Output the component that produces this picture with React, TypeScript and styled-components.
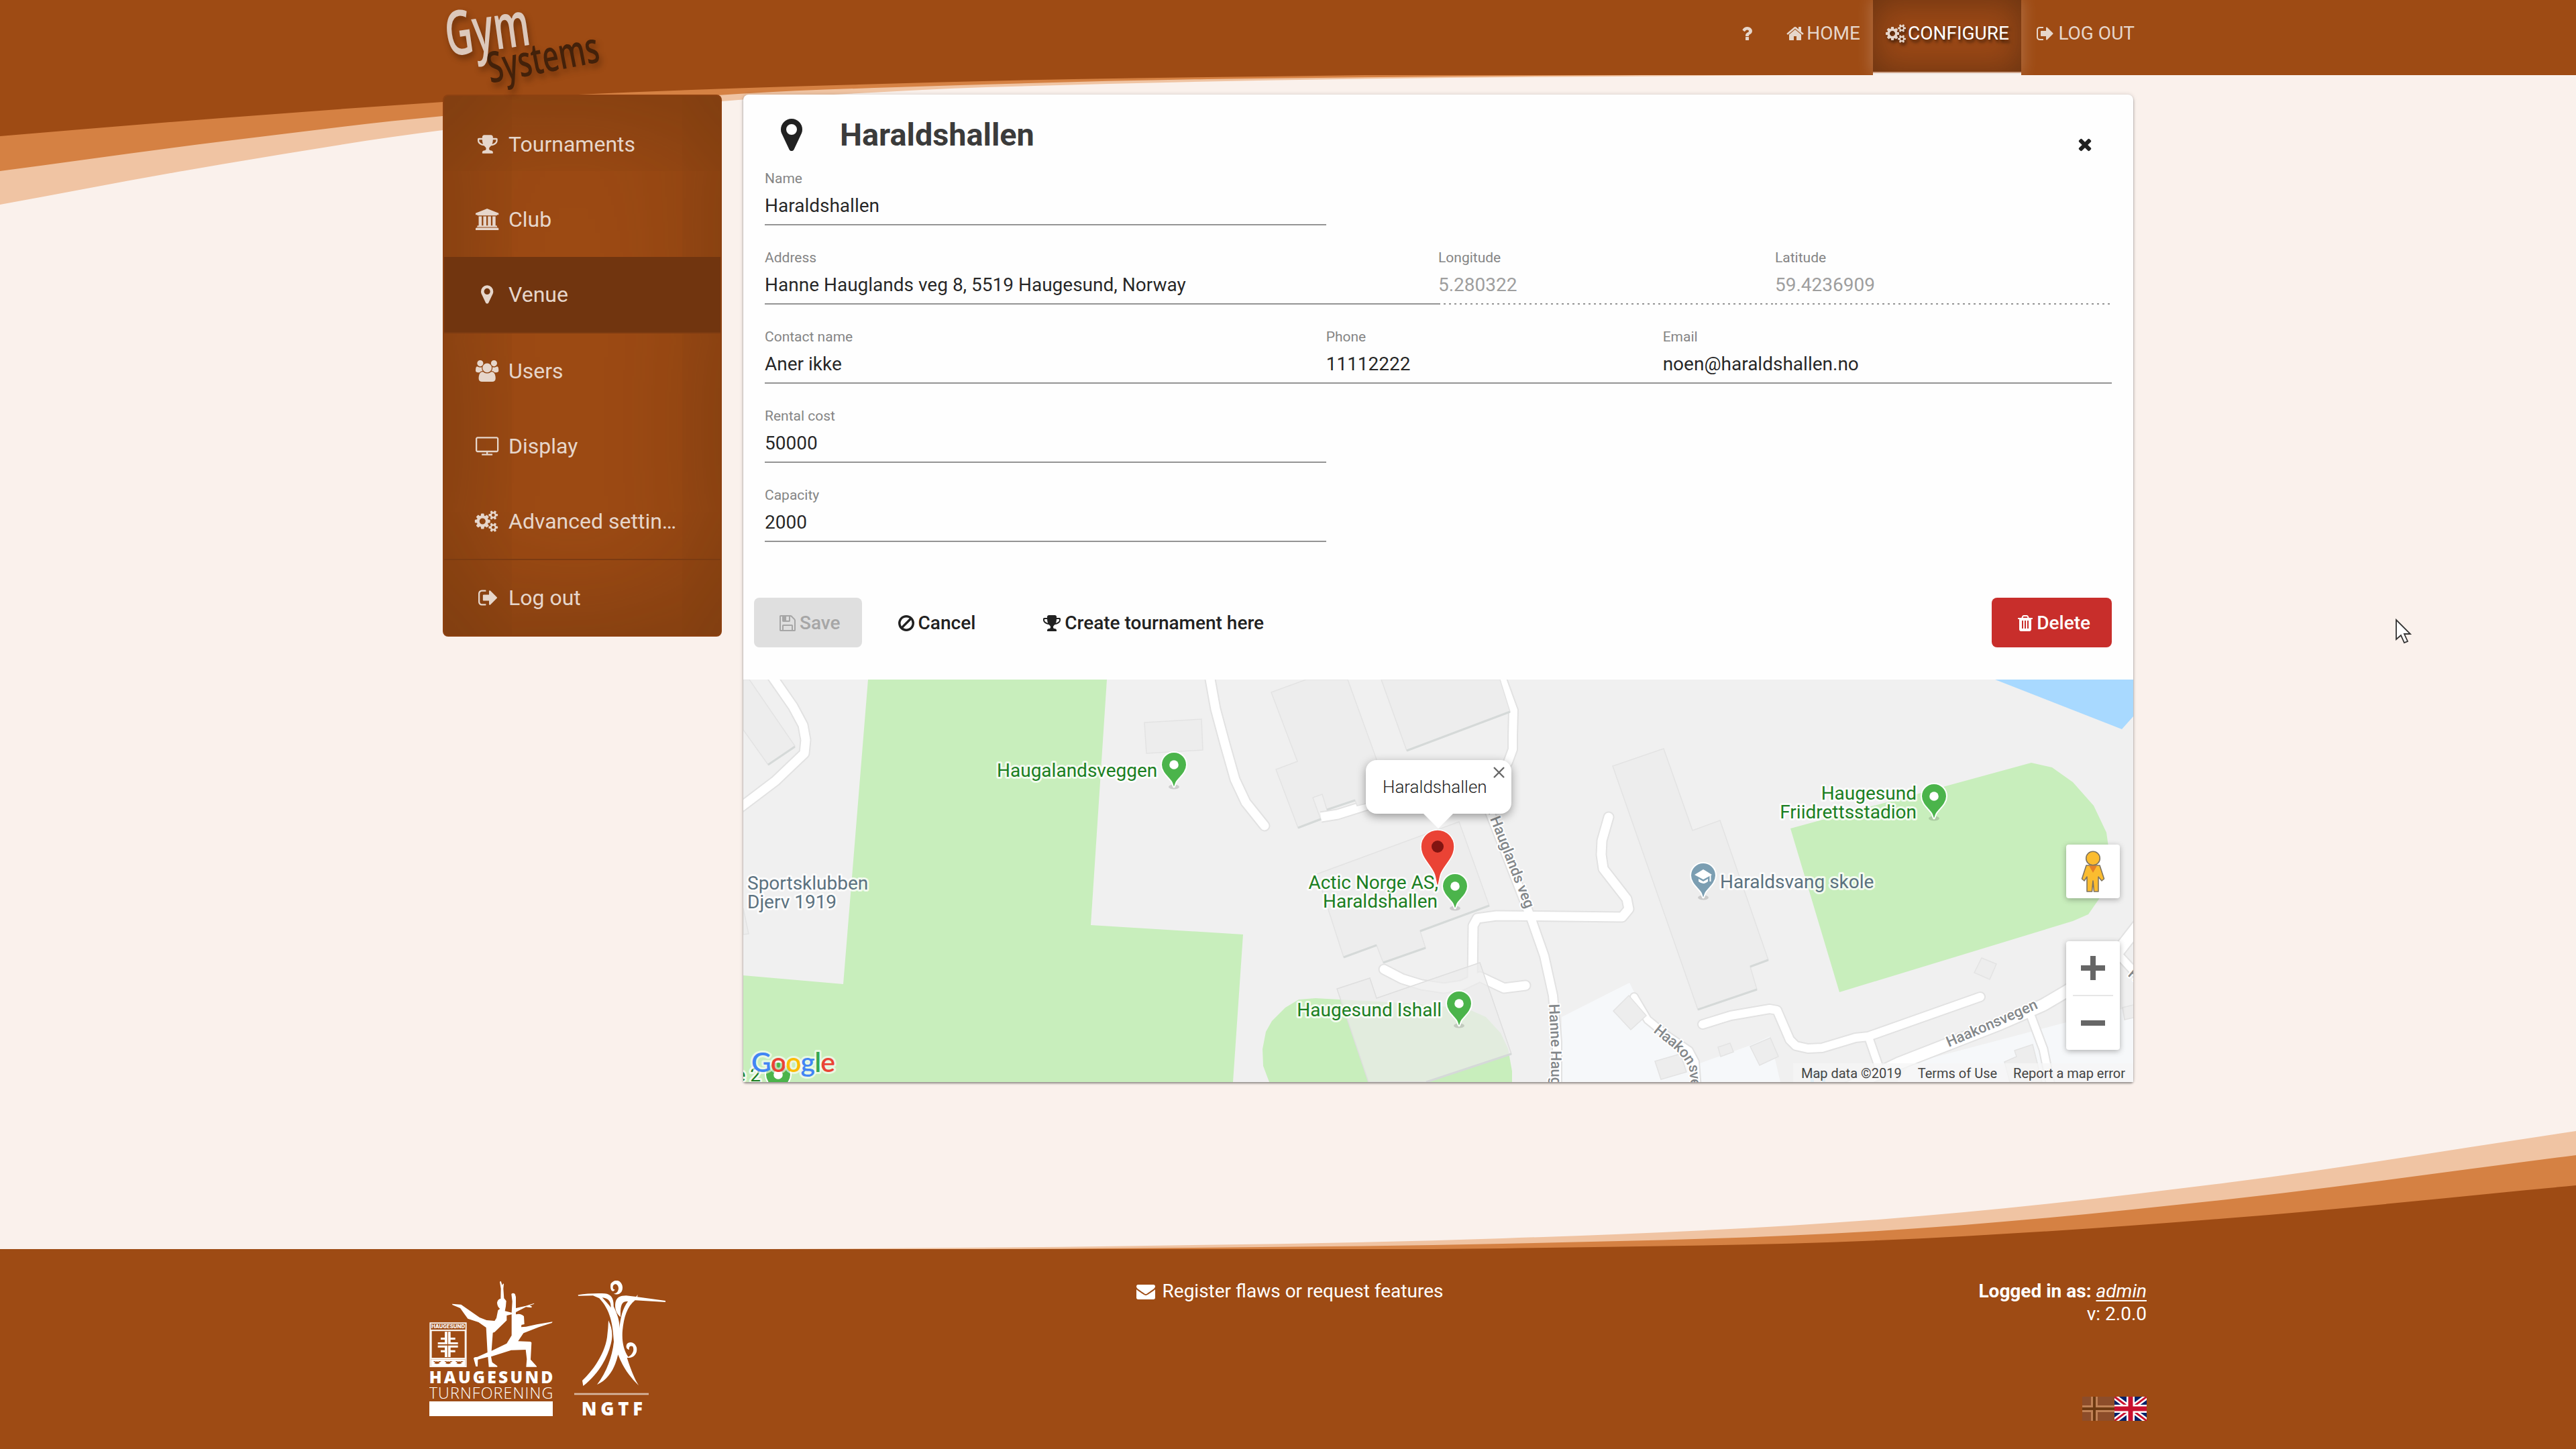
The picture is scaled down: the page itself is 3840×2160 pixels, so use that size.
import React from 'react';
import styled, { createGlobalStyle, css } from 'styled-components';

const c = {
  brand: '#9e4b14',
  mid: '#d58143',
  light: '#f0c4a3',
  page: '#faf1ec',
  pale: '#e6d6cb',
  ink: '#212121',
};

const GlobalStyle = createGlobalStyle`
  *, *::before, *::after { box-sizing: border-box; }
  html, body { margin: 0; padding: 0; }
  body { background: ${c.page}; font-family: Roboto, "Noto Sans", sans-serif; font-size: 28px; color: ${c.ink}; }
`;

/* ---------- icons ---------- */

type Glyph = { x: number; w: number; d: string };

const glyphs: Record<string, Glyph> = {
  marker: { x: 384, w: 1024, d: 'M1152 640q0-106-75-181t-181-75-181 75-75 181 75 181 181 75 181-75 75-181zm256 0q0 109-33 179l-364 774q-16 33-47.5 52t-67.5 19-67.5-19-46.5-52l-365-774q-33-70-33-179 0-212 150-362t362-150 362 150 150 362z' },
  trophy: { x: 64, w: 1664, d: 'M522 883q-74-162-74-371h-256v96q0 78 94.5 162t235.5 113zm1078-275v-96h-256q0 209-74 371 141-29 235.5-113t94.5-162zm128-128v128q0 71-41.5 143t-112 130-173 97.5-215.5 44.5q-42 54-95 95-38 34-52.5 72.5t-14.5 89.5q0 54 30.5 91t97.5 37q75 0 133.5 45.5t58.5 114.5v64q0 14-9 23t-23 9h-832q-14 0-23-9t-9-23v-64q0-69 58.5-114.5t133.5-45.5q67 0 97.5-37t30.5-91q0-51-14.5-89.5t-52.5-72.5q-53-41-95-95-113-5-215.5-44.5t-173-97.5-112-130-41.5-143v-128q0-40 28-68t68-28h288v-96q0-66 47-113t113-47h576q66 0 113 47t47 113v96h288q40 0 68 28t28 68z' },
  university: { x: 0, w: 1920, d: 'M960 0l960 384v128h-128q0 26-20.5 45t-48.5 19h-1526q-28 0-48.5-19t-20.5-45h-128v-128zm-704 640h256v768h128v-768h256v768h128v-768h256v768h128v-768h256v768h59q28 0 48.5 19t20.5 45v64h-1664v-64q0-26 20.5-45t48.5-19h59v-768zm1595 960q28 0 48.5 19t20.5 45v128h-1920v-128q0-26 20.5-45t48.5-19h1782z' },
  users: { x: 0, w: 1920, d: 'M593 896q-162 5-265 128h-134q-82 0-138-40.5t-56-118.5q0-353 124-353 6 0 43.5 21t97.5 42.5 119 21.5q67 0 133-23-5 37-5 66 0 159 81 256zm1071 637q0 120-73 189.5t-194 69.5h-874q-121 0-194-69.5t-73-189.5q0-53 3.5-103.5t14-109 26.5-108.5 43-97.5 62-81 85.5-53.5 111.5-20q10 0 43 21.5t73 48 107 48 135 21.5 135-21.5 107-48 73-48 43-21.5q61 0 111.5 20t85.5 53.5 62 81 43 97.5 26.5 108.5 14 109 3.5 103.5zm-1024-1277q0 106-75 181t-181 75-181-75-75-181 75-181 181-75 181 75 75 181zm704 384q0 159-112.5 271.5t-271.5 112.5-271.5-112.5-112.5-271.5 112.5-271.5 271.5-112.5 271.5 112.5 112.5 271.5zm576 225q0 78-56 118.5t-138 40.5h-134q-103-123-265-128 81-97 81-256 0-29-5-66 66 23 133 23 59 0 119-21.5t97.5-42.5 43.5-21q124 0 124 353zm-128-609q0 106-75 181t-181 75-181-75-75-181 75-181 181-75 181 75 75 181z' },
  television: { x: 0, w: 1920, d: 'M1792 1248v-960q0-13-9.5-22.5t-22.5-9.5h-1600q-13 0-22.5 9.5t-9.5 22.5v960q0 13 9.5 22.5t22.5 9.5h1600q13 0 22.5-9.5t9.5-22.5zm128-960v960q0 66-47 113t-113 47h-736v128h352q14 0 23 9t9 23v64q0 14-9 23t-23 9h-832q-14 0-23-9t-9-23v-64q0-14 9-23t23-9h352v-128h-736q-66 0-113-47t-47-113v-960q0-66 47-113t113-47h1600q66 0 113 47t47 113z' },
  cogs: { x: 0, w: 1920, d: 'M832 896q0-106-75-181t-181-75-181 75-75 181 75 181 181 75 181-75 75-181zm768 512q0-52-38-90t-90-38-90 38-38 90q0 53 37.5 90.5t90.5 37.5 90.5-37.5 37.5-90.5zm0-1024q0-52-38-90t-90-38-90 38-38 90q0 53 37.5 90.5t90.5 37.5 90.5-37.5 37.5-90.5zm-384 421v185q0 10-7 19.5t-16 10.5l-155 24q-11 35-32 76 34 48 90 115 7 11 7 20 0 12-7 19-23 30-82.5 89.5t-78.5 59.5q-11 0-21-7l-115-90q-37 19-77 31-11 108-23 155-7 24-30 24h-186q-11 0-20-7.5t-10-17.5l-23-153q-34-10-75-31l-118 89q-7 7-20 7-11 0-21-8-144-133-144-160 0-9 7-19 10-14 41-53t47-61q-23-44-35-82l-152-24q-10-1-17-9.5t-7-19.5v-185q0-10 7-19.5t16-10.5l155-24q11-35 32-76-34-48-90-115-7-11-7-20 0-12 7-20 22-30 82-89t79-59q11 0 21 7l115 90q34-18 77-32 11-108 23-154 7-24 30-24h186q11 0 20 7.5t10 17.5l23 153q34 10 75 31l118-89q8-7 20-7 11 0 21 8 144 133 144 160 0 8-7 19-12 16-42 54t-45 60q23 48 34 82l152 23q10 2 17 10.5t7 19.5zm640 533v140q0 16-149 31-12 27-30 52 51 113 51 138 0 4-4 7-122 71-124 71-8 0-46-47t-52-68q-20 2-30 2t-30-2q-14 21-52 68t-46 47q-2 0-124-71-4-3-4-7 0-25 51-138-18-25-30-52-149-15-149-31v-140q0-16 149-31 13-29 30-52-51-113-51-138 0-4 4-7 4-2 35-20t59-34 30-16q8 0 46 46.5t52 67.5q20-2 30-2t30 2q51-71 92-112l6-2q4 0 124 70 4 3 4 7 0 25-51 138 17 23 30 52 149 15 149 31zm0-1024v140q0 16-149 31-12 27-30 52 51 113 51 138 0 4-4 7-122 71-124 71-8 0-46-47t-52-68q-20 2-30 2t-30-2q-14 21-52 68t-46 47q-2 0-124-71-4-3-4-7 0-25 51-138-18-25-30-52-149-15-149-31v-140q0-16 149-31 13-29 30-52-51-113-51-138 0-4 4-7 4-2 35-20t59-34 30-16q8 0 46 46.5t52 67.5q20-2 30-2t30 2q51-71 92-112l6-2q4 0 124 70 4 3 4 7 0 25-51 138 17 23 30 52 149 15 149 31z' },
  signOut: { x: 64, w: 1568, d: 'M704 1440q0 4 1 20t.5 26.5-3 23.5-10 19.5-20.5 6.5h-320q-119 0-203.5-84.5t-84.5-203.5v-704q0-119 84.5-203.5t203.5-84.5h320q13 0 22.5 9.5t9.5 22.5q0 4 1 20t.5 26.5-3 23.5-10 19.5-20.5 6.5h-320q-66 0-113 47t-47 113v704q0 66 47 113t113 47h312l11.5 1 11.5 3 8 5.5 7 9 2 13.5zm928-544q0 26-19 45l-544 544q-19 19-45 19t-45-19-19-45v-288h-448q-26 0-45-19t-19-45v-384q0-26 19-45t45-19h448v-288q0-26 19-45t45-19 45 19l544 544q19 19 19 45z' },
  home: { x: 64, w: 1664, d: 'M1472 992v480q0 26-19 45t-45 19h-384v-384h-256v384h-384q-26 0-45-19t-19-45v-480q0-1 .5-3t.5-3l575-474 575 474q1 2 1 6zm223-69l-62 74q-8 9-21 11h-3q-13 0-21-7l-692-577-692 577q-12 8-24 7-13-2-21-11l-62-74q-8-10-7-23.5t11-21.5l719-599q32-26 76-26t76 26l244 204v-195q0-14 9-23t23-9h192q14 0 23 9t9 23v408l219 182q10 8 11 21.5t-7 23.5z' },
  question: { x: 384, w: 1024, d: 'M1088 1256v240q0 16-12 28t-28 12h-240q-16 0-28-12t-12-28v-240q0-16 12-28t28-12h240q16 0 28 12t12 28zm316-600q0 54-15.5 101t-35 76.5-55 59.5-57.5 43.5-61 35.5q-41 23-68.5 65t-27.5 67q0 17-12 32.5t-28 15.5h-240q-15 0-25.5-18.5t-10.5-37.5v-45q0-83 65-156.5t143-108.5q59-27 84-56t25-76q0-42-46.5-74t-107.5-32q-65 0-108 29-35 25-107 115-13 16-31 16-12 0-25-8l-164-125q-13-10-15.5-25t5.5-28q160-266 464-266 80 0 161 31t146 83 106 127.5 41 158.5z' },
  times: { x: 192, w: 1408, d: 'M1490 1322q0 40-28 68l-136 136q-28 28-68 28t-68-28l-294-294-294 294q-28 28-68 28t-68-28l-136-136q-28-28-28-68t28-68l294-294-294-294q-28-28-28-68t28-68l136-136q28-28 68-28t68 28l294 294 294-294q28-28 68-28t68 28l136 136q28 28 28 68t-28 68l-294 294 294 294q28 28 28 68z' },
  floppy: { x: 128, w: 1536, d: 'M512 1536h768v-384h-768v384zm896 0h128v-896q0-14-10-38.5t-20-34.5l-281-281q-10-10-34-20t-39-10v416q0 40-28 68t-68 28h-576q-40 0-68-28t-28-68v-416h-128v1280h128v-416q0-40 28-68t68-28h832q40 0 68 28t28 68v416zm-384-928v-320q0-13-9.5-22.5t-22.5-9.5h-192q-13 0-22.5 9.5t-9.5 22.5v320q0 13 9.5 22.5t22.5 9.5h192q13 0 22.5-9.5t9.5-22.5zm640 32v928q0 40-28 68t-68 28h-1344q-40 0-68-28t-28-68v-1344q0-40 28-68t68-28h928q40 0 88 20t76 48l280 280q28 28 48 76t20 88z' },
  ban: { x: 128, w: 1536, d: 'M1440 893q0-161-87-295l-754 753q137 89 297 89 111 0 211.5-43.5t173.5-116.5 116-174.5 43-212.5zm-999 299l755-754q-135-91-300-91-148 0-273 73t-198 199-73 274q0 162 89 299zm1223-299q0 157-61 300t-163.5 246-245 164-298.5 61-298.5-61-245-164-163.5-246-61-300 61-299.5 163.5-245.5 245-164 298.5-61 298.5 61 245 164 163.5 245.5 61 299.5z' },
  trash: { x: 192, w: 1408, d: 'M704 1376v-704q0-14-9-23t-23-9h-64q-14 0-23 9t-9 23v704q0 14 9 23t23 9h64q14 0 23-9t9-23zm256 0v-704q0-14-9-23t-23-9h-64q-14 0-23 9t-9 23v704q0 14 9 23t23 9h64q14 0 23-9t9-23zm256 0v-704q0-14-9-23t-23-9h-64q-14 0-23 9t-9 23v704q0 14 9 23t23 9h64q14 0 23-9t9-23zm-544-992h448l-48-117q-7-9-17-11h-317q-10 2-17 11zm928 32v64q0 14-9 23t-23 9h-96v948q0 83-47 143.5t-113 60.5h-832q-66 0-113-58.5t-47-141.5v-952h-96q-14 0-23-9t-9-23v-64q0-14 9-23t23-9h309l70-167q15-37 54-63t79-26h320q40 0 79 26t54 63l70 167h309q14 0 23 9t9 23z' },
  envelope: { x: 0, w: 1792, d: 'M1792 710v794q0 66-47 113t-113 47h-1472q-66 0-113-47t-47-113v-794q44 49 101 87 362 246 497 345 57 42 92.5 65.5t94.5 48 110 24.5h2q51 0 110-24.5t94.5-48 92.5-65.5q170-123 498-345 57-39 100-87zm0-294q0 79-49 151t-122 123q-376 261-468 325-10 7-42.5 31t-54 38.5-52 32.5-57.5 27-50 9h-2q-23 0-50-9t-57.5-27-52-32.5-54-38.5-42.5-31q-91-64-262-182.5t-205-142.5q-62-42-117-115.5t-55-136.5q0-78 41.5-130t118.5-52h1472q65 0 112.5 47t47.5 113z' },
};

const IconSvg = styled.svg`
  display: block;
  flex: none;
  fill: currentColor;
  overflow: visible;
`;

const Icon = ({ name, size = 28 }: { name: string; size?: number }) => {
  const g = glyphs[name];
  return (
    <IconSvg width={(g.w / 1792) * size} height={size} viewBox={`${g.x} 0 ${g.w} 1792`}>
      <path d={g.d} />
    </IconSvg>
  );
};

/* ---------- page background ---------- */

type Pt = [number, number];

const curve = (pts: Pt[]) =>
  pts.reduce((d, p, i) => {
    if (i === 0) return `M${p[0]} ${p[1]}`;
    const slope = (k: number) => {
      const a = pts[Math.max(0, k - 1)];
      const b = pts[Math.min(pts.length - 1, k + 1)];
      return (b[1] - a[1]) / (b[0] - a[0]);
    };
    const q = pts[i - 1];
    const h = (p[0] - q[0]) / 3;
    return `${d}C${q[0] + h} ${q[1] + h * slope(i - 1)} ${p[0] - h} ${p[1] - h * slope(i)} ${p[0]} ${p[1]}`;
  }, '');

const topWaves: { fill: string; pts: Pt[] }[] = [
  { fill: c.light, pts: [[0, 305], [330, 245], [660, 194], [1076, 151], [1280, 139], [1470, 130], [2000, 118], [2800, 111]] },
  { fill: c.mid, pts: [[0, 255], [330, 211], [660, 173], [1100, 140], [1336, 130], [1800, 118], [2560, 111]] },
  { fill: c.brand, pts: [[0, 203], [330, 176], [660, 152], [862, 141], [1100, 131.5], [1280, 126], [1600, 118], [2100, 111]] },
];

const bottomWaves: { fill: string; pts: Pt[] }[] = [
  { fill: c.light, pts: [[1000, 1863], [1640, 1858], [2240, 1846], [2800, 1818], [3320, 1763], [3840, 1686]] },
  { fill: c.mid, pts: [[1200, 1863], [1640, 1861], [2240, 1854], [2800, 1835], [3320, 1788], [3840, 1722]] },
  { fill: c.brand, pts: [[1800, 1863], [2240, 1861], [2800, 1849], [3320, 1816], [3840, 1767]] },
];

const WavesSvg = styled.svg`
  position: absolute;
  inset: 0;
  width: 3840px;
  height: 2160px;
  z-index: 0;
`;

const Waves = () => (
  <WavesSvg viewBox="0 0 3840 2160">
    {topWaves.map((w) => (
      <path key={w.fill} fill={w.fill} d={`${curve(w.pts)}V0H0Z`} />
    ))}
    {bottomWaves.map((w) => (
      <path key={w.fill} fill={w.fill} d={`${curve(w.pts)}V1870H${w.pts[0][0]}Z`} />
    ))}
  </WavesSvg>
);

/* ---------- shell ---------- */

const Page = styled.div`
  position: relative;
  display: flex;
  flex-direction: column;
  width: 3840px;
  height: 2160px;
  overflow: hidden;
`;

const Header = styled.header`
  position: relative;
  z-index: 2;
  display: flex;
  justify-content: space-between;
  height: 112px;
  padding: 0 640px 0 660px;
  background: ${c.brand};
`;

const Logo = styled.svg`
  display: block;
  width: 260px;
  height: 140px;
  overflow: visible;
  font-family: "Open Sans", "Noto Sans", sans-serif;
  font-weight: 600;
  filter: drop-shadow(3px 6px 5px rgba(50, 20, 0, 0.45));
`;

const Nav = styled.nav`
  display: flex;
  align-items: flex-start;
`;

const NavItem = styled.a<{ $active?: boolean; $before?: number; $after?: number; $gap?: number }>`
  display: flex;
  align-items: center;
  gap: ${(p) => p.$gap ?? 4}px;
  height: 100px;
  padding: 0 ${(p) => p.$after ?? 18}px 0 ${(p) => p.$before ?? 20}px;
  color: ${c.pale};
  line-height: 98px;
  white-space: nowrap;
  ${(p) =>
    p.$active &&
    css`
      height: 109px;
      padding-bottom: 7px;
      border-bottom: 2px solid #cda48c;
      background: #9a4816;
      color: #fff;
      text-shadow: 2px 4px 4px rgba(0, 0, 0, 0.6);
      box-shadow: inset 0 0 50px rgba(40, 25, 10, 0.45), 0 3px 0 #f5f0ed, 0 0 22px 2px rgba(255, 255, 255, 0.22);
      svg { color: ${c.pale}; filter: drop-shadow(2px 4px 2px rgba(0, 0, 0, 0.5)); }
    `}
`;

const Main = styled.main`
  position: relative;
  z-index: 1;
  display: flex;
  align-items: flex-start;
  gap: 32px;
  width: 2520px;
  margin: 29px auto 0;
`;

const Sidebar = styled.nav`
  width: 416px;
  padding: 16px 0 0;
  border: 2px solid rgba(110, 50, 12, 0.35);
  border-radius: 8px;
  background: ${c.brand};
  box-shadow: inset 0 0 200px rgba(50, 30, 10, 0.44);
`;

const SideItem = styled.a<{ $active?: boolean; $ruled?: boolean }>`
  display: flex;
  align-items: center;
  gap: 11px;
  height: 112px;
  padding-left: 44px;
  color: ${c.pale};
  font-size: 32px;
  white-space: nowrap;
  ${(p) => p.$active && css`background: #71350f;`}
  ${(p) => p.$ruled && css`height: 114px; border-bottom: 2px solid #7c3b11;`}
`;

const SideIcon = styled.span`
  display: flex;
  justify-content: center;
  width: 41px;
`;

/* ---------- venue card ---------- */

const Card = styled.section`
  width: 2072px;
  height: 1472px;
  border-radius: 8px 8px 4px 4px;
  background: #fefefe;
  box-shadow: 0 2px 3px rgba(0, 0, 0, 0.38), 0 0 6px rgba(0, 0, 0, 0.14);
`;

const CardHead = styled.div`
  display: flex;
  align-items: flex-start;
  height: 103px;
  padding: 32px 61px 0 56px;
`;

const Title = styled.h1`
  flex: 1;
  margin: 0 0 0 56px;
  color: #3b3b3b;
  font-size: 46.8px;
  font-weight: 700;
  line-height: 56px;
`;

const CloseButton = styled.button`
  display: flex;
  margin-top: 28px;
  padding: 0;
  border: 0;
  background: none;
  color: ${c.ink};
`;

const Form = styled.form`
  padding: 0 32px;
`;

const FormRow = styled.div`
  display: grid;
  grid-template-columns: repeat(12, 1fr);
  height: 118px;
`;

const Field = styled.label<{ $span: number; $disabled?: boolean }>`
  display: flex;
  flex-direction: column;
  grid-column: span ${(p) => p.$span};
  height: 92px;
  padding-top: 8px;
  background: ${(p) =>
    p.$disabled
      ? 'linear-gradient(to right, #949494 0 3px, transparent 3px) 0 100% / 8px 2px repeat-x'
      : 'linear-gradient(#949494, #949494) 0 100% / 100% 2px no-repeat'};
  color: ${(p) => (p.$disabled ? '#9e9e9e' : 'rgba(0, 0, 0, 0.87)')};
`;

const FieldLabel = styled.span`
  color: #858585;
  font-size: 21px;
  line-height: 28px;
`;

const FieldValue = styled.span`
  margin-top: 11px;
  font-size: 28px;
  line-height: 32px;
`;

const Actions = styled.div`
  display: flex;
  align-items: center;
  height: 74px;
  margin: 57px 32px 0 16px;
`;

const Button = styled.button<{ $tone?: 'muted' | 'danger'; $left: number; $right: number }>`
  display: flex;
  align-items: center;
  gap: 6px;
  height: 74px;
  padding: 2px ${(p) => p.$right}px 0 ${(p) => p.$left}px;
  border: 0;
  border-radius: 8px;
  background: ${(p) => (p.$tone === 'muted' ? '#dfdfdf' : p.$tone === 'danger' ? '#c82e2b' : 'transparent')};
  color: ${(p) => (p.$tone === 'muted' ? '#a6a6a6' : p.$tone === 'danger' ? '#fff' : c.ink)};
  font: 500 28px/36px Roboto, sans-serif;
  white-space: nowrap;
  ${(p) => p.$tone === 'danger' && css`margin-left: auto;`}
`;

/* ---------- map ---------- */

const MapFrame = styled.div`
  position: relative;
  height: 600px;
  margin-top: 48px;
  overflow: hidden;
  background: #f0f0f0;
`;

const MapSvg = styled.svg`
  display: block;
  width: 2072px;
  height: 600px;
  font-family: Roboto, sans-serif;
`;

const Building = styled.polygon`
  fill: #ededed;
  stroke: #e3e3e3;
  stroke-width: 1.5;
`;

const Park = styled.polygon`
  fill: #c8eebc;
`;

const Plot = styled.polygon`
  fill: #f6f8fa;
`;

const Edge = styled.path`
  fill: none;
  stroke: #d5d9d8;
  stroke-width: 3;
`;

const RoadLine = styled.path<{ $w: number; $casing?: boolean; $butt?: boolean }>`
  fill: none;
  stroke: ${(p) => (p.$casing ? '#e2e2e2' : '#fff')};
  stroke-width: ${(p) => (p.$casing ? p.$w + 4 : p.$w)};
  stroke-linecap: ${(p) => (p.$butt ? 'butt' : 'round')};
  stroke-linejoin: round;
`;

const Place = styled.text<{ $kind?: 'plain' }>`
  fill: ${(p) => (p.$kind === 'plain' ? '#5b7280' : '#1b7f22')};
  stroke: rgba(255, 255, 255, 0.75);
  stroke-width: 6px;
  stroke-linejoin: round;
  paint-order: stroke;
  font-size: 28px;
`;

const Street = styled.text`
  fill: #83878a;
  stroke: #fff;
  stroke-width: 4px;
  stroke-linejoin: round;
  paint-order: stroke;
  font-size: 22px;
  font-weight: 500;
`;

const roads: { d: string; w: number; butt?: boolean }[] = [
  { d: 'M42 -6L74 40L89 68L93 90L91 110L48 151L-6 192', w: 13 },
  { d: 'M695 -6L704 44L718 96L733 149L749 183L777 218', w: 13 },
  { d: 'M861 205L886 201L924 189L960 178', w: 13, butt: true },
  { d: 'M1129 -6L1148 46L1147 84L1147 104L1140 123L1120 150L1106 180L1174 355L1194 412L1207 471L1213 540L1213 610', w: 12 },
  { d: 'M1290 205L1280 240L1279 261L1282 282L1317 327L1320 342L1310 354L1123 352L1094 356L1088 367L1087 444', w: 13 },
  { d: 'M955 432L982 446L1011 455L1044 460L1071 456L1098 443L1134 460L1166 456', w: 13 },
  { d: 'M1328 473L1348 507L1375 529L1410 553L1419 570L1422 610', w: 10 },
  { d: 'M1920 503L1938 551L1950 610', w: 11 },
  { d: 'M2050 410L2085 448', w: 11 },
  { d: 'M1677 532L1692 575', w: 11 },
  { d: 'M1430 514L1472 501L1530 491L1541 493L1560 537L1569 546L1587 550L1608 549L1658 534L1677 532L1844 473', w: 12 },
  { d: 'M1640 612L1723 572L1874 513L1938 485L1972 465L2035 424L2080 366', w: 17 },
];

const houses = [
  '0,0 9,0 77,99 37,127 0,75',
  '0,341 8,379 0,380',
  '598,64 683,59 685,105 601,110',
  '787,19 839,0 901,0 944,119 928,185 915,188 912,180 870,194 863,171 849,176 861,209 827,221 794,134 826,122',
  '951,0 989,106 1143,48 1128,0',
  '855,290 1067,212 1112,337 1009,375 1017,400 954,422 944,396 895,414',
  '1297,494 1320,471 1346,501 1323,522',
  '1359,569 1397,558 1406,585 1368,596',
  '1296,129 1372,103 1415,225 1456,210 1528,418 1501,428 1511,462 1423,492',
  '1835,437 1846,415 1868,424 1858,447',
  '1453,548 1471,542 1476,555 1457,562',
  '1501,547 1531,534 1543,562 1515,575',
  '1880,570 1898,562 1895,553 1922,544 1936,600 1888,600',
  '2056,489 2080,483 2080,502 2059,507',
];

const edges =
  'M77 100L37 127M827 221L861 208M870 194L912 180M989 106L1143 48M1112 337L1009 375M1017 400L954 422M944 396L895 414M1528 418L1501 428M1511 462L1423 492';

const Pin = ({ x, y, color = '#4bb44b', school }: { x: number; y: number; color?: string; school?: boolean }) => (
  <g transform={`translate(${x} ${y})`}>
    <ellipse cx="0" cy="33" rx="8" ry="3.5" fill="rgba(0,0,0,.14)" />
    <path
      d="M0 33.5C-1.5 33.5-1.8 29-3.5 26C-7 19.5-19 12-19 0A19 19 0 0 1 19 0C19 12 7 19.5 3.5 26C1.8 29 1.5 33.5 0 33.5Z"
      fill={color}
      stroke="#fff"
      strokeWidth="2"
    />
    {school ? (
      <g fill="#fff">
        <path d="M-13-1L0-9L13-1L0 6Z" />
        <path d="M-7 5V9Q0 15 7 9V5L0 9Z" />
        <path d="M9.5 0H11.5V9H9.5Z" />
      </g>
    ) : (
      <circle r="6.8" fill="#fff" />
    )}
  </g>
);

const Popup = styled.div`
  position: absolute;
  left: 928px;
  top: 120px;
  display: flex;
  align-items: center;
  width: 217px;
  height: 80px;
  padding: 0 0 0 25px;
  border-radius: 16px;
  background: #fff;
  box-shadow: 0 4px 14px rgba(0, 0, 0, 0.38);
  color: #222;
  font-size: 26px;
  font-weight: 300;
  &::after {
    content: '';
    position: absolute;
    left: 86px;
    top: 80px;
    border: solid transparent;
    border-width: 22px 22px 0;
    border-top-color: #fff;
  }
`;

const PopupClose = styled.svg`
  position: absolute;
  right: 10px;
  top: 10px;
  width: 17px;
  height: 17px;
`;

const MapControls = styled.div`
  position: absolute;
  right: 20px;
  top: 246px;
  display: flex;
  flex-direction: column;
  gap: 64px;
`;

const ControlBox = styled.div`
  display: flex;
  flex-direction: column;
  align-items: center;
  justify-content: center;
  width: 80px;
  min-height: 80px;
  border-radius: 4px;
  background: #fff;
  box-shadow: 0 2px 8px rgba(0, 0, 0, 0.3);
`;

const ZoomButton = styled.button`
  display: flex;
  align-items: center;
  justify-content: center;
  width: 60px;
  height: 80px;
  padding: 0;
  border: 0;
  background: none;
  & + & { border-top: 2px solid #e6e6e6; height: 82px; }
`;

const Attribution = styled.div`
  position: absolute;
  right: 0;
  bottom: 0;
  display: flex;
  color: #444;
  font-size: 20px;
  line-height: 26px;
`;

const Credit = styled.span`
  padding: 2px 12px 0;
  background: rgba(245, 245, 245, 0.75);
`;

const VenueMap = () => (
  <MapFrame>
    <MapSvg viewBox="0 0 2072 600">
      <defs>
        <path id="street-a" d="M1094 160L1109 197L1170 352L1184 392" />
        <path id="street-b" d="M1201 484L1204 540L1205 720" />
        <path id="street-c" d="M1356 525L1376 541Q1400 558 1410 580L1416 640" />
        <path id="street-d" d="M1797 548L1868 518L1948 482" />
      </defs>
      <Plot points="1220,503 1321,452 1340,490 1400,545 1426,572 1502,545 1530,532 1546,600 1220,600" />
      <Plot points="1741,572 1972,511 2072,487 2072,600 1720,600" />
      <Park points="186,0 542,0 518,366 745,380 730,600 0,600 0,441 149,454" />
      <Park points="784,600 775,576 774,551 779,525 788,509 808,489 828,477 853,475 1000,483 1080,491 1107,503 1129,527 1140,550 1146,584 1146,600" />
      <Park points="1561,222 1920,124 1951,131 1982,153 2013,188 2032,228 2038,270 2034,305 2021,327 2005,350 1982,360 1634,466" />
      <polygon fill="#a8d9ff" points="1866,0 2055,74 2072,55 2072,0" />
      {roads.map((r) => <RoadLine key={r.d} d={r.d} $w={r.w} $butt={r.butt} $casing />)}
      {roads.map((r) => <RoadLine key={r.d} d={r.d} $w={r.w} $butt={r.butt} />)}
      {houses.map((h) => <Building key={h} points={h} />)}
      <polygon
        points="885,461 934,445 944,475 1098,422 1145,558 1018,600 932,600"
        fill="rgba(236,236,236,.72)"
        stroke="#dedede"
        strokeWidth="1.5"
      />
      <Edge d={edges} />
      <Edge d="M1145 558L1018 600" />
      <path d="M1591 584h22v16h-5v-9h-12v9h-5z" fill="#a9dcf5" />

      <Street letterSpacing="-0.1"><textPath href="#street-a" startOffset="34">e Hauglands veg</textPath></Street>
      <Street><textPath href="#street-b">Hanne Hauglands</textPath></Street>
      <Street letterSpacing="-0.5"><textPath href="#street-c">Haakonsve</textPath></Street>
      <Street><textPath href="#street-d">Haakonsvegen</textPath></Street>
      <Street transform="translate(2063 441) rotate(40)">H</Street>

      <Place x="378" y="145">Haugalandsveggen</Place>
      <Place x="1036" y="312" textAnchor="end">Actic Norge AS,</Place>
      <Place x="1035" y="340" textAnchor="end">Haraldshallen</Place>
      <Place x="1041" y="502" textAnchor="end">Haugesund Ishall</Place>
      <Place x="1749" y="179" textAnchor="end">Haugesund</Place>
      <Place x="1749" y="207" textAnchor="end">Friidrettsstadion</Place>
      <Place x="26" y="599" textAnchor="end">e 2</Place>
      <Place x="6" y="313" $kind="plain">Sportsklubben</Place>
      <Place x="6" y="341" $kind="plain">Djerv 1919</Place>
      <Place x="1456" y="311" $kind="plain">Haraldsvang skole</Place>

      <Pin x={642} y={127} />
      <Pin x={1061} y={308} />
      <Pin x={1067} y={483} />
      <Pin x={1775} y={174} />
      <Pin x={52} y={589} />
      <Pin x={1431} y={292} color="#7b9eb2" school />

      <path
        d="M1035 307C1033 307 1032.500 297 1030.500 291C1026 277 1010 267 1010 249A25 25 0 0 1 1060 249C1060 267 1044 277 1039.500 291C1037.500 297 1037 307 1035 307Z"
        fill="#ea4335"
        stroke="#fff"
        strokeWidth="1.5"
      />
      <circle cx="1035" cy="249" r="9" fill="#811411" />

      <text
        x="12"
        y="585"
        fontFamily="Lato, sans-serif"
        fontSize="41"
        fontWeight="600"
        stroke="rgba(255,255,255,.6)"
        strokeWidth="6"
        strokeLinejoin="round"
        paintOrder="stroke"
        textLength="125"
      >
        <tspan fill="#4285f4">G</tspan>
        <tspan fill="#ea4335">o</tspan>
        <tspan fill="#fbbc05">o</tspan>
        <tspan fill="#4285f4">g</tspan>
        <tspan fill="#34a853">l</tspan>
        <tspan fill="#ea4335">e</tspan>
      </text>
    </MapSvg>

    <Popup>
      Haraldshallen
      <PopupClose viewBox="0 0 17 17">
        <path d="M1 1L16 16M16 1L1 16" stroke="#666" strokeWidth="2.4" />
      </PopupClose>
    </Popup>

    <MapControls>
      <ControlBox>
        <svg width="36" height="62" viewBox="0 0 36 62">
          <g fill="#fbbc2f" stroke="#7d7360" strokeWidth="1.6" strokeLinejoin="round">
            <path d="M8 22H28L34.500 42L31 45L26 39V61H19.500L18 45L16.500 61H9V39L5 45L1.500 42Z" />
            <circle cx="18" cy="11.500" r="10.300" />
          </g>
          <path d="M12 22.500H24L18 33Z" fill="#e58027" />
        </svg>
      </ControlBox>
      <ControlBox>
        <ZoomButton>
          <svg width="36" height="36"><path d="M0 14H14V0H22V14H36V22H22V36H14V22H0Z" fill="#666" /></svg>
        </ZoomButton>
        <ZoomButton>
          <svg width="36" height="8"><path d="M0 0H36V8H0Z" fill="#666" /></svg>
        </ZoomButton>
      </ControlBox>
    </MapControls>

    <Attribution>
      <Credit>Map data ©2019</Credit>
      <Credit>Terms of Use</Credit>
      <Credit>Report a map error</Credit>
    </Attribution>
  </MapFrame>
);

/* ---------- footer ---------- */

const Footer = styled.footer`
  position: relative;
  z-index: 1;
  display: grid;
  grid-template-columns: 1fr auto 1fr;
  height: 298px;
  margin-top: auto;
  padding: 47px 640px 0;
  background: ${c.brand};
  color: #fff;
  line-height: 34px;
`;

const Sponsors = styled.div`
  display: flex;
  align-items: flex-start;
  gap: 32px;
`;

const Feedback = styled.a`
  display: flex;
  align-items: center;
  gap: 11px;
  height: 32px;
  padding-left: 5px;
`;

const Session = styled.div`
  display: flex;
  flex-direction: column;
  align-items: flex-end;
  margin-top: -1px;
`;

const User = styled.a`
  font-style: italic;
  font-weight: 400;
  text-decoration: underline;
  text-decoration-thickness: 2px;
  text-underline-offset: 4px;
`;

const Flags = styled.div`
  display: flex;
  margin-top: 106px;
`;

const Flag = styled.svg<{ $dim?: boolean }>`
  display: block;
  width: 48px;
  height: 36px;
  opacity: ${(p) => (p.$dim ? 0.45 : 1)};
`;

const ClubLogo = () => (
  <svg width="184" height="202" viewBox="120 147 552 606" fill="#fff">
    <path d="M121 334H287V534H121ZM127 340V366H281V340ZM131 373V492H278V373ZM127 499V528H281V499Z" fillRule="evenodd" opacity=".92" />
    <rect x="127" y="499" width="154" height="29" />
    <g fill={c.brand}>
      <path d="M137 509q8-4 12 1q3-2 5-2q2 0 5 2q6-5 15-1q-8 2-12 6q3 1 4 3q-5 1-8 0q-4 3-8 0q-4 1-8 0q3-2 4-4q-3-4-9-5z" />
      <path d="M187 509q8-4 12 1q3-2 5-2q2 0 5 2q6-5 15-1q-8 2-12 6q3 1 4 3q-5 1-8 0q-4 3-8 0q-4 1-8 0q3-2 4-4q-3-4-9-5z" />
      <path d="M236 509q8-4 12 1q3-2 5-2q2 0 5 2q6-5 15-1q-8 2-12 6q3 1 4 3q-5 1-8 0q-4 3-8 0q-4 1-8 0q3-2 4-4q-3-4-9-5z" />
    </g>
    <path d="M189 376H201V431H158V423H189V411H171V402H189ZM204 376H215V402H236V411H215V423H248V431H204ZM158 437H201V489H189V467H171V458H189V446H158ZM204 437H248V446H215V458H236V467H215V489H204Z" />
    <text x="129" y="361" fontFamily="Inter, sans-serif" fontSize="23" fontWeight="800" textLength="150" lengthAdjust="spacingAndGlyphs">HAUGESUND</text>
    <path d="M221 251L262 254L290 274L345 312L376 324L412 327L420 314L427 280L436 273Q423 262 423 245Q426 230 439 228L440 183L435 152L440 149L446 168L450 160L453 162L451 183L454 226L464 238L462 262L458 283L488 290L491 240L487 207Q494 199 503 207L507 220V270L551 260L589 248L588 251L568 259L578 262L577 268L552 265L507 288V298Q530 292 543 307L545 342L532 345L531 355L552 353L600 343L671 331L668 336L610 355L541 382L517 418L572 420L577 424L573 500L600 530V533H553L556 498L551 456L486 458L396 487L401 512L424 529V533H386L382 488L337 500L336 531H328L318 494Q320 488 335 488L380 468L374 357L340 333L292 317L258 270L224 256ZM412 377L404 380L398 461L466 428L488 392V298L466 303V325Z" fillRule="evenodd" />
    <text x="119" y="607" fontFamily="Open Sans, sans-serif" fontSize="74" fontWeight="800" textLength="554" lengthAdjust="spacing">HAUGESUND</text>
    <text x="119" y="675" fontFamily="Open Sans, sans-serif" fontSize="70" fontWeight="300" textLength="554" lengthAdjust="spacing">TURNFORENING</text>
    <rect x="120" y="687" width="552" height="66" />
  </svg>
);

const NgtfLogo = () => (
  <svg width="136" height="202" viewBox="768 147 408 606" fill="#fff">
    <path d="M932 160C944 146 958 143 970 150C984 160 988 180 980 196C972 209 956 212 944 205C958 205 966 194 966 180C965 165 952 156 943 168C938 178 942 190 950 186C946 198 934 196 931 182Q929 168 932 160Z" />
    <path d="M785 211C820 205 870 203 905 205C935 208 945 228 944 262C962 300 972 330 970 362C975 310 985 270 1008 240C980 238 974 255 975 310C958 296 948 276 952 246C956 222 974 214 1000 214L1045 219L1052 209L1050 220L1176 237V243L1040 235C1005 262 990 310 984 370C980 420 990 460 1010 488C1028 478 1038 460 1030 442C1022 436 1010 440 1014 456C1004 456 996 444 1004 430C1018 416 1040 424 1047 446C1052 474 1034 494 1004 492C1016 530 1034 580 1056 616C1010 570 984 530 964 478C950 540 920 590 870 612C910 560 938 490 945 420C940 340 930 280 880 226L852 214L786 215ZM893 223C915 245 928 262 932 268C932 240 922 226 893 223Z" fillRule="evenodd" />
    <path d="M921 325C938 360 942 390 932 430C915 500 870 570 808 618L804 594C860 540 905 470 915 400Q920 360 921 325Z" />
    <rect x="768" y="650" width="333" height="8" opacity=".6" />
    <text x="800" y="751" fontFamily="Open Sans, sans-serif" fontSize="82" fontWeight="800" textLength="274">NGTF</text>
  </svg>
);

const Cursor = styled.svg`
  position: absolute;
  left: 3570px;
  top: 922px;
  z-index: 3;
  width: 26px;
  height: 40px;
`;

const sideItems: { icon: string; label: string; active?: boolean; ruled?: boolean }[] = [
  { icon: 'trophy', label: 'Tournaments' },
  { icon: 'university', label: 'Club' },
  { icon: 'marker', label: 'Venue', active: true, ruled: true },
  { icon: 'users', label: 'Users' },
  { icon: 'television', label: 'Display' },
  { icon: 'cogs', label: 'Advanced settin…', ruled: true },
  { icon: 'signOut', label: 'Log out' },
];

const rows: { label: string; value: string; span: number; disabled?: boolean }[][] = [
  [{ label: 'Name', value: 'Haraldshallen', span: 5 }],
  [
    { label: 'Address', value: 'Hanne Hauglands veg 8, 5519 Haugesund, Norway', span: 6 },
    { label: 'Longitude', value: '5.280322', span: 3, disabled: true },
    { label: 'Latitude', value: '59.4236909', span: 3, disabled: true },
  ],
  [
    { label: 'Contact name', value: 'Aner ikke', span: 5 },
    { label: 'Phone', value: '11112222', span: 3 },
    { label: 'Email', value: 'noen@haraldshallen.no', span: 4 },
  ],
  [{ label: 'Rental cost', value: '50000', span: 5 }],
  [{ label: 'Capacity', value: '2000', span: 5 }],
];

export default function App() {
  return (
    <>
      <GlobalStyle />
      <Page>
        <Waves />
        <Header>
          <Logo viewBox="660 0 260 140">
            <text transform="translate(668 84) rotate(-8) scale(.62 1)" fontSize="92" fill="#dcc8bb">Gym</text>
            <text transform="translate(731 124) rotate(-11) scale(.66 1)" fontSize="64" fill="#43210a">Systems</text>
          </Logo>
          <Nav>
            <NavItem $after={31}><Icon name="question" /></NavItem>
            <NavItem $after={19}><Icon name="home" />HOME</NavItem>
            <NavItem $active $gap={2}><Icon name="cogs" />CONFIGURE</NavItem>
            <NavItem $before={23} $gap={8}><Icon name="signOut" />LOG OUT</NavItem>
          </Nav>
        </Header>

        <Main>
          <Sidebar>
            {sideItems.map((it) => (
              <SideItem key={it.label} $active={it.active} $ruled={it.ruled}>
                <SideIcon><Icon name={it.icon} size={32} /></SideIcon>
                {it.label}
              </SideItem>
            ))}
          </Sidebar>

          <Card>
            <CardHead>
              <Icon name="marker" size={56} />
              <Title>Haraldshallen</Title>
              <CloseButton><Icon name="times" /></CloseButton>
            </CardHead>
            <Form>
              {rows.map((row) => (
                <FormRow key={row[0].label}>
                  {row.map((f) => (
                    <Field key={f.label} $span={f.span} $disabled={f.disabled}>
                      <FieldLabel>{f.label}</FieldLabel>
                      <FieldValue>{f.value}</FieldValue>
                    </Field>
                  ))}
                </FormRow>
              ))}
            </Form>
            <Actions>
              <Button $tone="muted" $left={38} $right={32}><Icon name="floppy" />Save</Button>
              <Button $left={54} $right={50}><Icon name="ban" />Cancel</Button>
              <Button $left={51} $right={32}><Icon name="trophy" />Create tournament here</Button>
              <Button $tone="danger" $left={39} $right={32}><Icon name="trash" />Delete</Button>
            </Actions>
            <VenueMap />
          </Card>
        </Main>

        <Footer>
          <Sponsors>
            <ClubLogo />
            <NgtfLogo />
          </Sponsors>
          <Feedback><Icon name="envelope" />Register flaws or request features</Feedback>
          <Session>
            <div><b>Logged in as:</b> <User>admin</User></div>
            <div>v: 2.0.0</div>
            <Flags>
              <Flag $dim viewBox="0 0 48 36">
                <path d="M0 0H48V36H0Z" fill="#7a5046" />
                <path d="M13 0H23V36H13ZM0 13H48V23H0Z" fill="#eac3a4" />
                <path d="M16 0H20V36H16ZM0 16H48V20H0Z" fill="#33240f" />
              </Flag>
              <Flag viewBox="0 0 48 36">
                <path d="M0 0H48V36H0Z" fill="#012169" />
                <path d="M0 0L48 36M48 0L0 36" stroke="#fff" strokeWidth="8" />
                <path d="M0 0L48 36M48 0L0 36" stroke="#c8102e" strokeWidth="3" />
                <path d="M24 0V36M0 18H48" stroke="#fff" strokeWidth="12" />
                <path d="M24 0V36M0 18H48" stroke="#c8102e" strokeWidth="7" />
              </Flag>
            </Flags>
          </Session>
        </Footer>

        <Cursor viewBox="0 0 26 40">
          <path d="M2 2V31L9 25L14 36L19 34L14 23H23Z" fill="#fff" stroke="#333" strokeWidth="1.8" />
        </Cursor>
      </Page>
    </>
  );
}
